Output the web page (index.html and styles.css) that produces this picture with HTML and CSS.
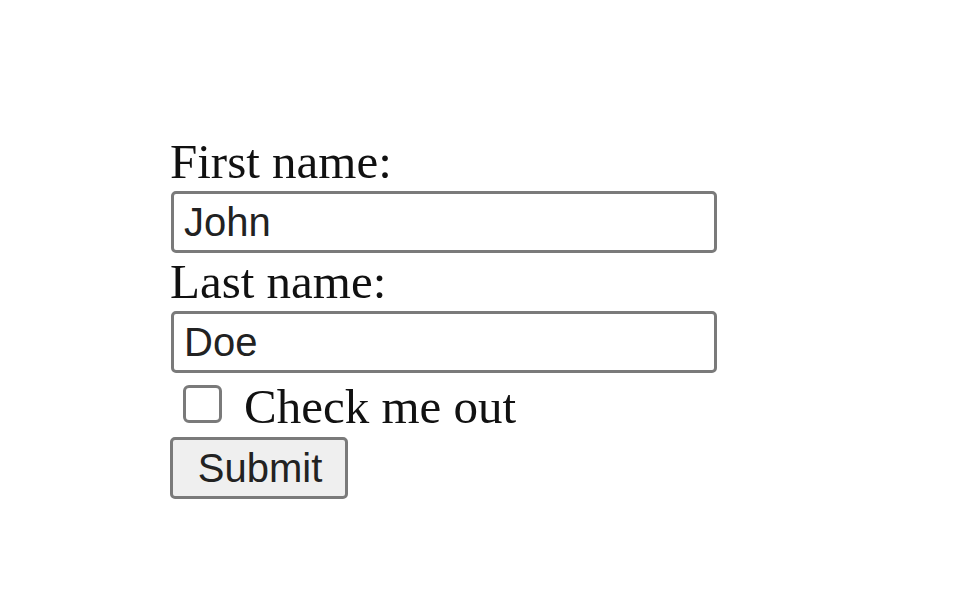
FILE: index.html
```html
<!DOCTYPE html>
<html>
<head>
<meta charset="utf-8">
<link rel="stylesheet" href="styles.css">
</head>
<body>
<form class="form">
  <label class="label" for="fname">First name:</label>
  <input class="text-input" id="fname" type="text" value="John">
  <label class="label" for="lname">Last name:</label>
  <input class="text-input" id="lname" type="text" value="Doe">
  <div class="check-row">
    <input class="check" id="chk" type="checkbox">
    <label class="check-label" for="chk">Check me out</label>
  </div>
  <button class="submit" type="button">Submit</button>
</form>
</body>
</html>
```
FILE: styles.css
```css
html, body {
  margin: 0;
  padding: 0;
  background: #ffffff;
}
body {
  font-family: "Liberation Serif", "Times New Roman", serif;
  color: #000;
}
.form {
  display: flex;
  flex-direction: column;
  align-items: flex-start;
  padding: 133px 0 0 170px;
}
.label {
  display: block;
  font-size: 49px;
  line-height: 58px;
  height: 58px;
  color: #111;
}
.text-input {
  box-sizing: border-box;
  width: 546px;
  height: 62px;
  margin: 0 0 0 1px;
  padding: 0 10px;
  border: 3px solid #7a7a7a;
  border-radius: 5px;
  font-family: "Liberation Sans", Arial, sans-serif;
  font-size: 40px;
  color: #222;
  background: #fff;
  outline: none;
}
.check-row {
  display: flex;
  align-items: flex-start;
  height: 64px;
}
.check {
  appearance: none;
  -webkit-appearance: none;
  box-sizing: border-box;
  width: 39px;
  height: 38px;
  margin: 12px 0 0 13px;
  border: 3px solid #7a7a7a;
  border-radius: 6px;
  background: #fff;
}
.check-label {
  font-size: 49px;
  line-height: 55px;
  margin: 6px 0 0 22px;
  color: #111;
}
.submit {
  box-sizing: border-box;
  width: 178px;
  height: 62px;
  margin: 0;
  padding: 0 0 0 2px;
  border: 3px solid #7a7a7a;
  border-radius: 5px;
  background: #efefef;
  font-family: "Liberation Sans", Arial, sans-serif;
  font-size: 40px;
  color: #222;
}
```
